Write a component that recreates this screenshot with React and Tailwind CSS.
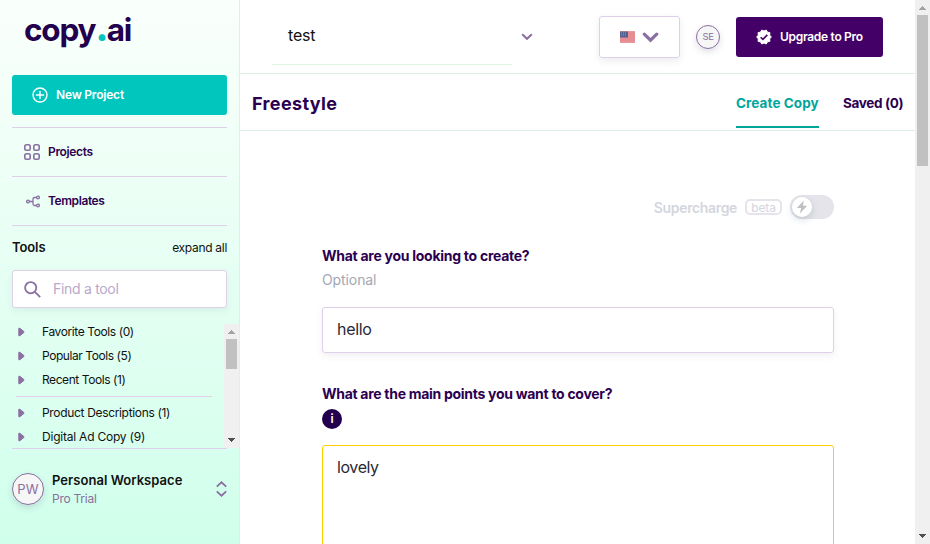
import React from "react";

function ToolRow({ children, className }) {
  return (
    <div className="flex h-6 items-center pl-[18px]">
      <svg width="7" height="10" viewBox="0 0 7 10" className="shrink-0">
        <path d="M.8 1.3v7.4h1L5.800 5.600V4.400L1.800 1.300z" fill="#8a6fa0" stroke="#8a6fa0" strokeWidth="1" strokeLinejoin="round" />
      </svg>
      <span className={"ml-[17px] whitespace-nowrap text-[12px] text-[#111] " + className}>{children}</span>
    </div>
  );
}

function Arrow({ up, color }) {
  return (
    <svg width="15" height="14" viewBox="0 0 15 14" className="shrink-0" shapeRendering="crispEdges">
      <path d={up ? "M4 10h7L7.5 6z" : "M4 4h7L7.5 8z"} fill={color} />
    </svg>
  );
}

function Flag() {
  return (
    <svg width="15" height="12" viewBox="0 0 15 12">
      <rect y=".5" width="15" height="11" rx="1" fill="#f0cfd2" />
      <path d="M0 1h15M0 3h15M0 5h15M0 7h15M0 9h15M0 11h15" stroke="#dc4c56" />
      <rect y=".5" width="8" height="6" fill="#55608f" />
      <path d="M1 2h6M1 4h6" stroke="#aeb6d2" strokeWidth=".7" strokeDasharray="1 1" />
    </svg>
  );
}

function Sidebar() {
  return (
    <aside className="flex h-full w-60 shrink-0 flex-col border-r border-[#d8f3e8] bg-linear-to-b from-[#fafffb] to-[#d0ffec]">
      <div className="h-[75px] pl-6">
        <div className="pt-[7px] text-[31.5px] leading-[40px] font-bold tracking-[-1.2px] text-[#22004d]">
          copy<span className="text-[40px] leading-none tracking-[-4px] text-[#00c4bd]">.</span><span className="ml-[2px]">ai</span>
        </div>
      </div>
      <button className="mx-3 flex h-10 w-[215px] shrink-0 items-center rounded-[3px] bg-[#00c6be] pl-5 text-white">
        <svg width="16" height="16" viewBox="0 0 16 16" fill="none" stroke="currentColor" strokeWidth="1.4">
          <circle cx="8" cy="8" r="7" />
          <path d="M8 4.4v7.2M4.4 8h7.2" strokeLinecap="round" />
        </svg>
        <span className="ml-2 text-[12px] font-semibold tracking-[-0.2px]">New Project</span>
      </button>
      <nav className="mx-3 mt-3 w-[215px] text-[12px] font-semibold text-[#2d0050]">
        <div className="flex h-[49px] items-center border-t border-[#ddd0e8] pl-3">
          <svg width="16" height="16" viewBox="0 0 16 16" fill="none" stroke="#8a6fa0" strokeWidth="1.6">
            <rect x=".8" y=".8" width="5.400" height="5.400" rx="1.7" />
            <rect x="9.800" y=".8" width="5.400" height="5.400" rx="1.7" />
            <rect x=".8" y="9.800" width="5.400" height="5.400" rx="1.7" />
            <rect x="9.800" y="9.800" width="5.400" height="5.400" rx="1.7" />
          </svg>
          <span className="ml-2 tracking-[-0.35px]">Projects</span>
        </div>
        <div className="flex h-[49px] items-center border-t border-[#ddd0e8] pl-3">
          <svg width="16" height="16" viewBox="0 0 16 16" fill="none" stroke="#8a6fa0" strokeWidth="1.3">
            <circle cx="4" cy="8.5" r="1.4" />
            <circle cx="14" cy="4.5" r="1.4" />
            <circle cx="14" cy="12.5" r="1.4" />
            <path d="M5.4 8.5H9M12.6 4.5h-2Q9 4.500 9 6v5q0 1.500 1.600 1.500h2" />
          </svg>
          <span className="ml-2 tracking-[-0.42px]">Templates</span>
        </div>
        <div className="flex h-[45px] items-center justify-between border-t border-[#ddd0e8] text-[#111]">
          <span className="text-[13px] tracking-[-0.1px]">Tools</span>
          <span className="font-normal tracking-[-0.3px]">expand all</span>
        </div>
      </nav>
      <div className="mx-3 flex h-[38px] w-[215px] shrink-0 items-center rounded-[3px] border border-[#ddd0e8] bg-white pl-[11px] shadow-[0_3px_7px_rgba(80,60,120,0.08)]">
        <svg width="17" height="17" viewBox="0 0 17 17" fill="none" stroke="#8a6fa0" strokeWidth="1.8">
          <circle cx="6.700" cy="6.700" r="5.600" />
          <path d="M10.800 10.800l5.400 5.400" />
        </svg>
        <span className="ml-3 pb-[2px] text-[14px] tracking-[-0.3px] text-[#b9a8c9]">Find a tool</span>
      </div>
      <div className="flex h-[140px] shrink-0 pt-3">
        <div className="w-[224px]">
          <ToolRow className="tracking-[-0.4px]">Favorite Tools (0)</ToolRow>
          <ToolRow className="tracking-[-0.43px]">Popular Tools (5)</ToolRow>
          <ToolRow className="tracking-[-0.43px]">Recent Tools (1)</ToolRow>
          <div className="mt-[4px] mr-3 mb-[4px] ml-4 h-px bg-[#ddd0e8]" />
          <ToolRow className="tracking-[-0.33px]">Product Descriptions (1)</ToolRow>
          <ToolRow className="tracking-[-0.22px]">Digital Ad Copy (9)</ToolRow>
        </div>
        <div className="mt-1 flex w-[15px] flex-col items-center bg-[#f0f0f0]">
          <Arrow up color="#a3a3a3" />
          <div className="mt-px h-[30px] w-[11px] bg-[#c1c1c1]" />
          <div className="mt-auto">
            <Arrow color="#505050" />
          </div>
        </div>
      </div>
      <div className="mx-3 flex h-[81px] w-[215px] shrink-0 items-center border-t border-[#ddd0e8]">
        <div className="flex size-8 items-center justify-center rounded-full border border-[#8a6fa0] bg-[#f6f6f6] pt-px text-[13px] tracking-[0.1px] text-[#8a6fa0] shadow-[0_3px_7px_rgba(50,50,90,0.15)]">PW</div>
        <div className="ml-2 flex flex-col pb-px">
          <span className="text-[13px] leading-[19px] font-semibold tracking-[0.04px] whitespace-nowrap text-[#111]">Personal Workspace</span>
          <span className="text-[12px] leading-[17px] tracking-[-0.25px] text-[#8a6fa0]">Pro Trial</span>
        </div>
        <svg width="11" height="16" viewBox="0 0 11 16" className="ml-auto" fill="none" stroke="#8a6fa0" strokeWidth="1.800">
          <path d="M.800 5.700l4.700-4.400 4.700 4.400M.800 10.300l4.700 4.400 4.700-4.400" />
        </svg>
      </div>
    </aside>
  );
}

function TopBar() {
  return (
    <header className="flex h-[74px] shrink-0 items-start border-b border-[#dcefe3] pl-8">
      <div className="flex h-[65px] w-60 items-center border-b border-[#e0f5e6] pl-4 text-[16px] text-[#111]">
        <span className="pt-[6px] tracking-[-0.2px]">test</span>
      </div>
      <svg width="12" height="8" viewBox="0 0 12 8" className="mt-[33px] ml-[9px]" fill="none" stroke="#8a6fa0" strokeWidth="2">
        <path d="M1.200 1.200L6 5.800l4.800-4.600" />
      </svg>
      <div className="mt-4 ml-[66px] flex h-[42px] w-[81px] items-center rounded-[3px] border border-[#ddd0e8] pl-5 shadow-[0_3px_7px_rgba(80,60,120,0.1)]">
        <Flag />
        <svg width="17" height="11" viewBox="0 0 17 11" className="ml-[7px]" fill="none" stroke="#8a6fa0" strokeWidth="3.200" strokeLinecap="round">
          <path d="M2.300 2.200l6.200 6 6.200-6" />
        </svg>
      </div>
      <div className="mt-[25px] ml-4 flex size-6 items-center justify-center rounded-full border border-[#8a6fa0] bg-[#f6f6f6] text-[9.5px] tracking-[-0.5px] text-[#8a6fa0] shadow-[0_3px_6px_rgba(50,50,90,0.14)]">SE</div>
      <button className="mt-[17px] ml-4 flex h-10 w-[147px] items-center rounded-[3px] bg-[#430066] pl-5 text-white">
        <svg width="16" height="16" viewBox="0 0 24 24">
          <path fill="#fff" d="M23 12l-2.440-2.780.340-3.680-3.610-.820-1.890-3.180L12 3 8.600 1.540 6.710 4.720l-3.610.810.340 3.680L1 12l2.440 2.780-.340 3.690 3.610.820 1.890 3.180L12 21l3.400 1.460 1.890-3.180 3.610-.820-.340-3.680z" stroke="#fff" strokeWidth="1.500" strokeLinejoin="round" />
          <path d="M7 12.300l3.400 3.300 6.600-6.700" fill="none" stroke="#430066" strokeWidth="2.400" />
        </svg>
        <span className="ml-2 text-[12px] font-semibold tracking-[-0.3px] whitespace-nowrap">Upgrade to Pro</span>
      </button>
    </header>
  );
}

export default function App() {
  return (
    <div className="flex h-[544px] w-[930px] overflow-hidden bg-white font-['Inter','Liberation_Sans',sans-serif]">
      <Sidebar />
      <main className="flex min-w-0 flex-1 flex-col">
        <TopBar />
        <div className="flex h-[57px] shrink-0 items-center border-b border-[#dcefe3] pr-3 pl-3 font-bold text-[#2b0050]">
          <h1 className="pt-[2px] text-[18px] tracking-[0.35px]">Freestyle</h1>
          <div className="mt-[4px] mr-6 ml-auto flex h-[48px] w-[83px] items-center border-b-2 border-[#00a59c] text-[13.5px] tracking-[0.08px] whitespace-nowrap text-[#00a59c]">Create Copy</div>
          <div className="w-[60px] pt-[2px] text-[13.5px] tracking-[-0.35px] whitespace-nowrap">Saved (0)</div>
        </div>
        <div className="flex min-h-0 flex-1 flex-col pr-[81px] pl-[82px]">
          <div className="mt-16 flex h-6 shrink-0 items-center justify-end text-[#d4d6de]">
            <span className="text-[14px] font-semibold tracking-[-0.35px]">Supercharge</span>
            <span className="ml-2 flex h-4 w-[37px] items-center justify-center rounded-[5px] border-2 border-[#e4e4ea] pt-px text-[12px] tracking-[-0.15px]">beta</span>
            <div className="ml-2 flex h-6 w-11 items-center rounded-full bg-[#e4e4ea] pl-[2px]">
              <div className="flex size-5 items-center justify-center rounded-full bg-white shadow-[0_3px_7px_rgba(60,90,100,0.2)]">
                <svg width="12" height="14" viewBox="0 0 12 14">
                  <path d="M7.800.600L.900 8h4.300L3.800 13.400 11.200 5.800H7z" fill="#bfbfc1" />
                </svg>
              </div>
            </div>
          </div>
          <label className="mt-[25px] shrink-0 text-[14px] leading-6 font-bold tracking-[-0.27px] text-[#2b0050]"><span>What are you looking to create?</span></label>
          <span className="text-[14px] leading-6 tracking-[-0.1px] text-[#a3a7b3]">Optional</span>
          <div className="mt-[15px] flex h-[46px] w-[512px] shrink-0 items-center rounded-[3px] border border-[#ddd0e8] pb-[2px] pl-[14px] text-[16px] tracking-[-0.3px] text-[#292936] shadow-[0_3px_7px_rgba(80,60,120,0.08)]">hello</div>
          <label className="mt-[29px] shrink-0 text-[14px] leading-6 font-bold tracking-[-0.29px] text-[#2b0050]"><span>What are the main points you want to cover?</span></label>
          <span className="mt-[3px] flex size-5 shrink-0 items-center justify-center rounded-full bg-[#22004d] text-[12px] font-semibold text-white">i</span>
          <div className="mt-4 h-[130px] w-[512px] shrink-0 rounded-t-[3px] border border-[#ffcd00] pt-[9px] pl-[14px] text-[16px] leading-6 tracking-[-0.4px] text-[#292936]">lovely</div>
        </div>
      </main>
      <div className="flex w-[15px] shrink-0 flex-col items-center bg-[#f0f0f0]">
        <Arrow up color="#a3a3a3" />
        <div className="mt-px h-[151px] w-[11px] bg-[#c1c1c1]" />
        <div className="mt-auto">
          <Arrow color="#505050" />
        </div>
      </div>
    </div>
  );
}
